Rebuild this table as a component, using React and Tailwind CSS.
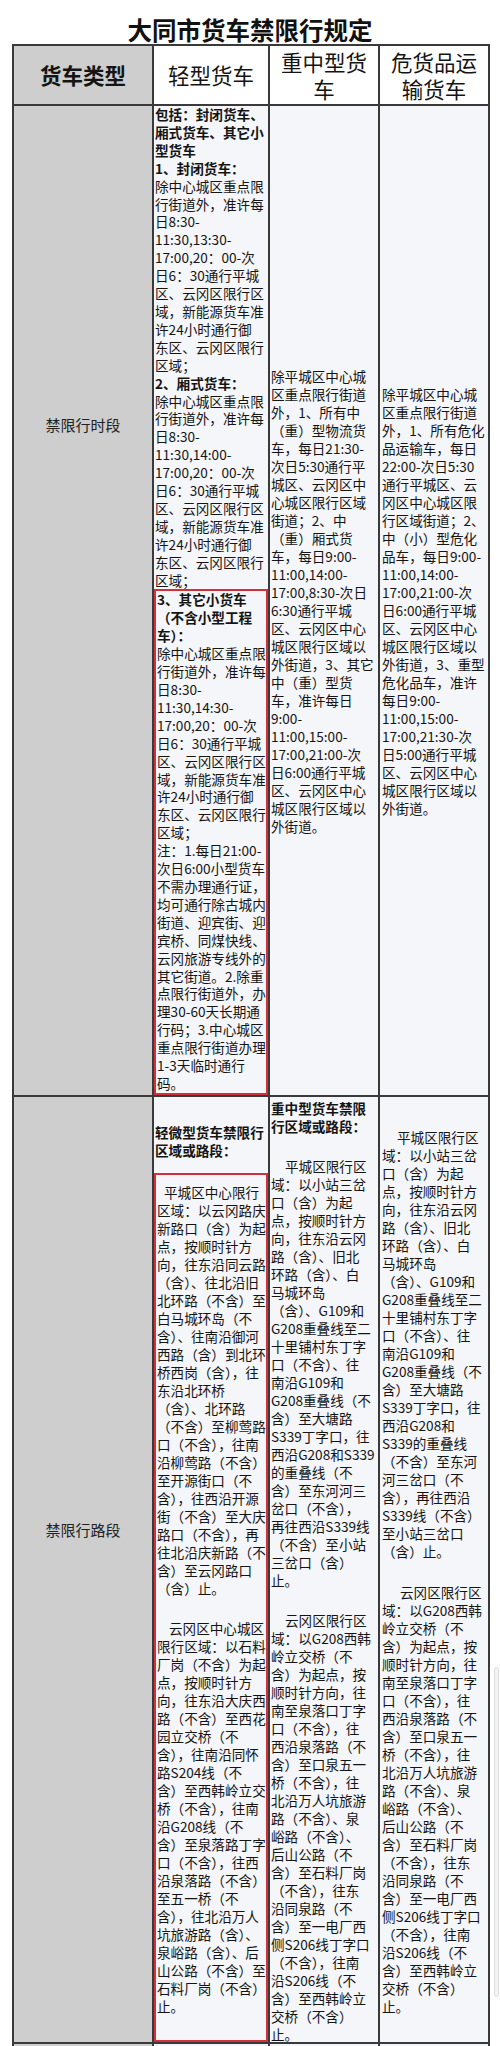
const FONT = "font-['Noto_Sans_CJK_SC',sans-serif]"

function Lines({ lines, lh = 'leading-[18px]', first = '' }) {
  return lines.map((t, i) => {
    const bold = t.startsWith('**')
    const text = bold ? t.slice(2) : t
    return (
      <div
        key={i}
        className={`whitespace-nowrap ${lh} ${bold ? 'font-bold' : ''} ${i === 0 ? first : ''}`}
      >
        {text}
      </div>
    )
  })
}

const r1c2a = [
  '**包括：封闭货车、', '**厢式货车、其它小', '**型货车', '**1、封闭货车：',
  '除中心城区重点限', '行街道外，准许每', '日8:30-', '11:30,13:30-', '17:00,20：00-次',
  '日6：30通行平城', '区、云冈区限行区', '域，新能源货车准', '许24小时通行御',
  '东区、云冈区限行', '区域；',
  '**2、厢式货车：',
  '除中心城区重点限', '行街道外，准许每', '日8:30-', '11:30,14:00-', '17:00,20：00-次',
  '日6：30通行平城', '区、云冈区限行区', '域，新能源货车准', '许24小时通行御',
  '东区、云冈区限行', '区域；',
]

const r1c2b = [
  '**3、其它小货车', '**（不含小型工程', '**车）：',
  '除中心城区重点限', '行街道外，准许每', '日8:30-', '11:30,14:30-', '17:00,20：00-次',
  '日6：30通行平城', '区、云冈区限行区', '域，新能源货车准', '许24小时通行御',
  '东区、云冈区限行', '区域；',
  '注：1.每日21:00-', '次日6:00小型货车', '不需办理通行证，', '均可通行除古城内',
  '街道、迎宾街、迎', '宾桥、同煤快线、', '云冈旅游专线外的', '其它街道。2.除重',
  '点限行街道外，办', '理30-60天长期通', '行码；3.中心城区', '重点限行街道办理',
  '1-3天临时通行', '码。',
]

const r1c3 = [
  '除平城区中心城', '区重点限行街道', '外，1、所有中', '（重）型物流货', '车，每日21:30-',
  '次日5:30通行平', '城区、云冈区中', '心城区限行区域', '街道；2、中', '（重）厢式货',
  '车，每日9:00-', '11:00,14:00-', '17:00,8:30-次日', '6:30通行平城', '区、云冈区中心',
  '城区限行区域以', '外街道，3、其它', '中（重）型货', '车，准许每日', '9:00-',
  '11:00,15:00-', '17:00,21:00-次', '日6:00通行平城', '区、云冈区中心', '城区限行区域以',
  '外街道。',
]

const r1c4 = [
  '除平城区中心城', '区重点限行街道', '外，1、所有危化', '品运输车，每日', '22:00-次日5:30',
  '通行平城区、云', '冈区中心城区限', '行区域街道；2、', '中（小）型危化', '品车，每日9:00-',
  '11:00,14:00-', '17:00,21:00-次', '日6:00通行平城', '区、云冈区中心', '城区限行区域以',
  '外街道，3、重型', '危化品车，准许', '每日9:00-', '11:00,15:00-', '17:00,21:30-次',
  '日5:00通行平城', '区、云冈区中心', '城区限行区域以', '外街道。',
]

const r2c2a = [
  '平城区中心限行', '区域：以云冈路庆', '新路口（含）为起', '点，按顺时针方', '向，往东沿同云路',
  '（含）、往北沿旧', '北环路（不含）至', '白马城环岛（不', '含）、往南沿御河', '西路（含）到北环',
  '桥西岗（含），往', '东沿北环桥', '（含）、北环路', '（不含）至柳莺路', '口（不含），往南',
  '沿柳莺路（不含）', '至开源街口（不', '含），往西沿开源', '街（不含）至大庆', '路口（不含），再',
  '往北沿庆新路（不', '含）至云冈路口', '（含）止。',
]

const r2c2b = [
  '云冈区中心城区', '限行区域：以石料', '厂岗（不含）为起', '点，按顺时针方', '向，往东沿大庆西',
  '路（不含）至西花', '园立交桥（不', '含），往南沿同怀', '路S204线（不', '含）至西韩岭立交',
  '桥（不含），往南', '沿G208线（不', '含）至泉落路丁字', '口（不含），往西', '沿泉落路（不含）',
  '至五一桥（不', '含），往北沿万人', '坑旅游路（含）、', '泉峪路（含）、后', '山公路（不含）至',
  '石料厂岗（不含）', '止。',
]

const r2c3a = [
  '平城区限行区', '域：以小站三岔', '口（含）为起', '点，按顺时针方', '向，往东沿云冈',
  '路（含）、旧北', '环路（含）、白', '马城环岛', '（含）、G109和', 'G208重叠线至二',
  '十里铺村东丁字', '口（不含）、往', '南沿G109和', 'G208重叠线（不', '含）至大塘路',
  'S339丁字口，往', '西沿G208和S339', '的重叠线（不', '含）至东河河三', '岔口（不含），',
  '再往西沿S339线', '（不含）至小站', '三岔口（含）', '止。',
]

const yungang = [
  '云冈区限行区', '域：以G208西韩', '岭立交桥（不', '含）为起点，按', '顺时针方向，往',
  '南至泉落口丁字', '口（不含），往', '西沿泉落路（不', '含）至口泉五一', '桥（不含），往',
  '北沿万人坑旅游', '路（不含）、泉', '峪路（不含）、', '后山公路（不', '含）至石料厂岗',
  '（不含），往东', '沿同泉路（不', '含）至一电厂西', '侧S206线丁字口', '（不含），往南',
  '沿S206线（不', '含）至西韩岭立', '交桥（不含）', '止。',
]

const r2c4a = [
  '平城区限行区', '域：以小站三岔', '口（含）为起', '点，按顺时针方', '向，往东沿云冈',
  '路（含）、旧北', '环路（含）、白', '马城环岛', '（含）、G109和', 'G208重叠线至二',
  '十里铺村东丁字', '口（不含）、往', '南沿G109和', 'G208重叠线（不', '含）至大塘路',
  'S339丁字口，往', '西沿G208和', 'S339的重叠线', '（不含）至东河', '河三岔口（不',
  '含），再往西沿', 'S339线（不含）', '至小站三岔口', '（含）止。',
]

export default function App() {
  return (
    <div className={`relative h-[2046px] overflow-hidden bg-white text-[#141414] ${FONT}`}>
      <div className="pt-[16px] text-center text-[24.5px] font-bold leading-[28px] text-[#111]">
        大同市货车禁限行规定
      </div>

      <div className="ml-[12px] grid w-fit grid-cols-[138px_114px_108px_108px] grid-rows-[58px_989px_945px_40px] gap-[2px] bg-[#3a3a3a] p-[2px] text-[13.6px]">
        {/* header */}
        <div className="flex items-center justify-center bg-[#cecece] text-[21.5px] font-bold">货车类型</div>
        <div className="flex items-center justify-center bg-white text-[21.5px]">轻型货车</div>
        <div className="flex flex-col items-center justify-center bg-white text-[21.5px] leading-[27px]">
          <div>重中型货</div>
          <div>车</div>
        </div>
        <div className="flex flex-col items-center justify-center bg-white text-[21.5px] leading-[27px]">
          <div>危货品运</div>
          <div>输货车</div>
        </div>

        {/* 禁限行时段 */}
        <div className="bg-[#cecece] pt-[309px] text-center text-[15px] leading-[20px] text-[#222]">禁限行时段</div>
        <div className="flex flex-col overflow-hidden bg-[#f4f6f9]">
          <div className="pl-[1px]">
            <Lines lines={r1c2a} lh="leading-[17.9px]" />
          </div>
          <div className="flex-1 border-2 border-[#d3313a] pl-[1px]">
            <Lines lines={r1c2b} lh="leading-[17.9px]" />
          </div>
        </div>
        <div className="flex flex-col justify-center bg-[#f4f6f9] pl-[1px]">
          <Lines lines={r1c3} />
        </div>
        <div className="flex flex-col justify-center bg-[#f4f6f9] pl-[2px]">
          <Lines lines={r1c4} />
        </div>

        {/* 禁限行路段 */}
        <div className="bg-[#cecece] pt-[423px] text-center text-[15px] leading-[20px] text-[#222]">禁限行路段</div>
        <div className="flex flex-col overflow-hidden bg-[#f4f6f9] pt-[26px]">
          <div className="pl-[1px]">
            <Lines lines={['**轻微型货车禁限行', '**区域或路段：']} />
          </div>
          <div className="mt-[14px] flex-1 border-2 border-[#d3313a] pl-[1px] pt-[8px]">
            <Lines lines={r2c2a} first="pl-[7px]" />
            <div className="h-[22px]" />
            <Lines lines={r2c2b} first="pl-[12px]" />
          </div>
        </div>
        <div className="overflow-hidden bg-[#f4f6f9] pl-[1px] pt-[2px]">
          <Lines lines={['**重中型货车禁限', '**行区域或路段：']} />
          <div className="h-[22px]" />
          <Lines lines={r2c3a} first="pl-[14px]" />
          <div className="h-[22px]" />
          <Lines lines={yungang} first="pl-[14px]" />
        </div>
        <div className="overflow-hidden bg-[#f4f6f9] pl-[2px] pt-[31px]">
          <Lines lines={r2c4a} first="pl-[15px]" />
          <div className="h-[23px]" />
          <Lines lines={yungang} first="pl-[18px]" />
        </div>

        {/* next row, cut off */}
        <div className="bg-[#cecece]" />
        <div className="bg-[#f4f6f9]" />
        <div className="bg-[#f4f6f9]" />
        <div className="bg-[#f4f6f9]" />
      </div>

      {/* scrollbar thumb */}
      <div className="absolute left-[494px] top-[1667px] h-[330px] w-[5px] rounded-full border border-[#dedede] bg-[#f3f3f3]" />
    </div>
  )
}
